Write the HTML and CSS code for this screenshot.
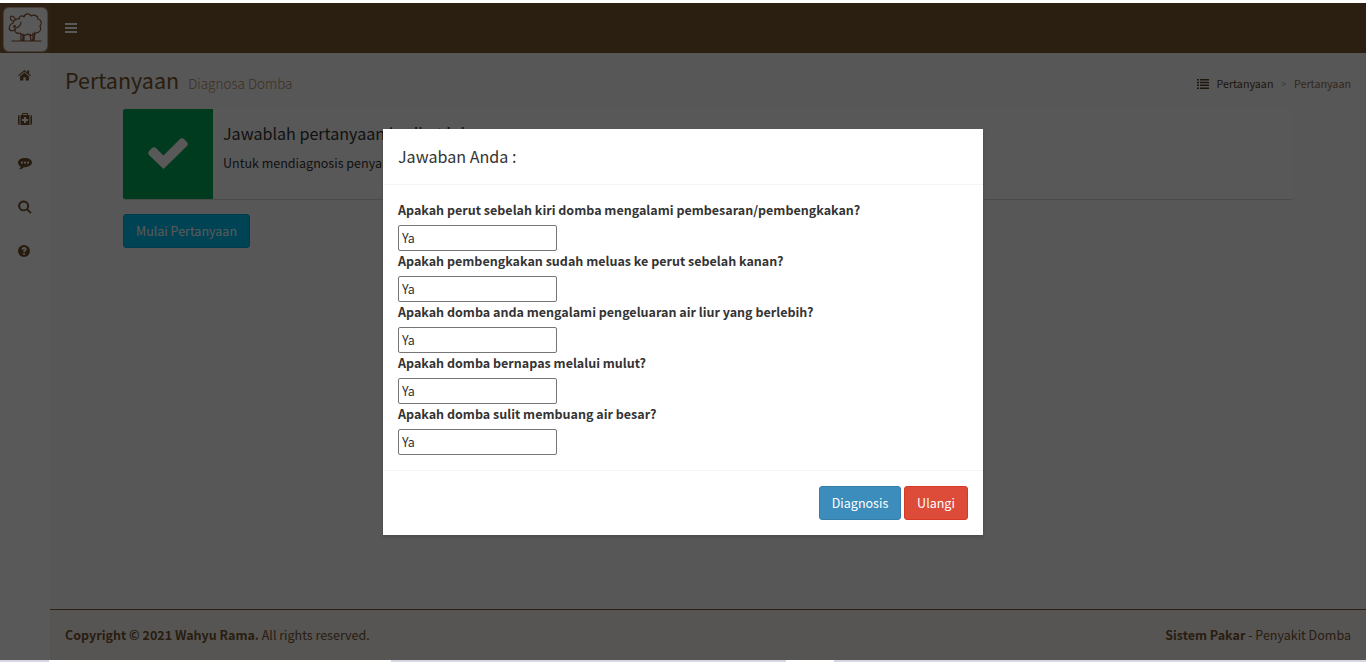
FILE: index.html
```html
<!DOCTYPE html>
<html lang="id">
<head>
<meta charset="utf-8">
<title>Pertanyaan</title>
<link rel="stylesheet" href="styles.css">
</head>
<body>
<div class="app">
  <header class="topbar">
    <div class="logo">
      <svg class="logo-img" viewBox="0 0 43 43" fill="none" stroke="#8a5238" stroke-width="1.2" stroke-linecap="round" stroke-linejoin="round">
        <path d="M15 11c0-3 3-4 5-2c1-4 6-4 7-1c4-2 7 0 7 3c4 1 4 5 2 7c2 4-1 7-4 7c-2 3-6 3-8 1c-3 2-7 1-8-1c-3 1-6-1-5-4"/>
        <path d="M15 11c-3-1-5 1-6 4c-3 1-5 5-3 7c2 2 5 0 6-2c3-1 5-3 5-6M10 13c-4 0-4-3-3-5c3 0 4 2 5 4M17 26v6h2v-6M20 27v5M26 26l1 6h2v-7M31 24l-1 8M8 33h29"/>
        <circle cx="10.500" cy="18.500" r=".8"/>
      </svg>
    </div>
    <svg class="burger" viewBox="0 0 12 12"><path fill="#fff" d="M0 1h12v2H0zM0 5h12v2H0zM0 9h12v2H0z"/></svg>
  </header>
  <div class="main">
    <nav class="sidebar">
      <a class="item"><svg viewBox="0 0 14 14"><path d="M7 1L0 7l.8.9L7 2.800l6.200 5.100L14 7l-2-1.700V1.500h-2v2.100zM7 3.900L2.200 8v4.500h3.600V9h2.400v3.500h3.600V8z"/></svg></a>
      <a class="item"><svg class="wide" viewBox="0 0 14 14"><path fill-rule="evenodd" d="M0 4.500Q0 3 1.500 3v10Q0 13 0 11.500zM12.500 3Q14 3 14 4.500v7q0 1.500-1.500 1.500zM2.500 3H4V2q0-1 1-1h4q1 0 1 1v1h1.500v10h-9zM5 3h4V2H5zM6 5v2H4v2h2v2h2V9h2V7H8V5z"/></svg></a>
      <a class="item"><svg class="wide" viewBox="0 0 14 14"><path fill-rule="evenodd" d="M7 2c4 0 7 2 7 4.600s-3 4.600-7 4.600h-1.200C4.500 12.600 3 13.200 1 13.300c1-.8 1.500-1.600 1.600-2.700C1 9.800 0 8.300 0 6.600C0 4 3 2 7 2zM3 5.700v1.900h2V5.700zm3 0v1.900h2V5.700zm3 0v1.900h2V5.700z"/></svg></a>
      <a class="item"><svg class="wide" viewBox="0 0 14 14"><path fill-rule="evenodd" d="M5.700.5a5.400 5.400 0 0 1 4.400 8.500l3.500 3.400-1.300 1.300-3.500-3.500A5.400 5.400 0 1 1 5.700.5zm0 1.900a3.500 3.500 0 1 0 0 7a3.500 3.500 0 0 0 0-7z"/></svg></a>
      <a class="item"><svg class="round" viewBox="0 0 14 14"><circle cx="7" cy="7" r="7"/><path class="hole" d="M4.200 5.300C4.300 3.300 5.600 2.400 7.100 2.400c1.600 0 3 1 3 2.600c0 2-2 2-2 3.200H6c0-2.200 2-2.100 2-3.100c0-1-1.600-1-1.800.6zM6 9.300h2.100v2.100H6z"/></svg></a>
    </nav>
    <div class="content">
      <div class="page-head">
        <h1>Pertanyaan<small>Diagnosa Domba</small></h1>
        <div class="crumbs">
          <svg viewBox="0 0 12 10"><path d="M0 0h2v1.500H0zM3 0h9v1.500H3zM0 2.800h2v1.500H0zM3 2.800h9v1.500H3zM0 5.600h2v1.500H0zM3 5.600h9v1.500H3zM0 8.400h2v1.500H0zM3 8.400h9v1.500H3z"/></svg>
          <span>Pertanyaan</span><span class="sep">&gt;</span><span class="current">Pertanyaan</span>
        </div>
      </div>
      <div class="body">
        <div class="info">
          <div class="info-icon"><svg viewBox="0 0 40 32"><path fill="#fff" d="M15.500 31L1 17q-1.500-2 0-4l3-3q2-1.500 4 0l7.500 7.500L32 1q2-1.500 4 0l3 3q1.500 2 0 4z"/></svg></div>
          <div class="info-text"><h4>Jawablah pertanyaan berikut ini :</h4><p>Untuk mendiagnosis penyakit domba</p></div>
        </div>
        <a class="btn aqua">Mulai Pertanyaan</a>
      </div>
      <footer class="footer">
        <div><b>Copyright © 2021 Wahyu Rama.</b> All rights reserved.</div>
        <div><b>Sistem Pakar</b> - Penyakit Domba</div>
      </footer>
    </div>
  </div>
</div>
<div class="taskbar"><i class="tab one"></i><i class="tab two"></i></div>
<div class="overlay">
  <section class="modal">
    <div class="modal-head">Jawaban Anda :</div>
    <div class="modal-body">
      <label>Apakah perut sebelah kiri domba mengalami pembesaran/pembengkakan?</label><input value="Ya">
      <label>Apakah pembengkakan sudah meluas ke perut sebelah kanan?</label><input value="Ya">
      <label>Apakah domba anda mengalami pengeluaran air liur yang berlebih?</label><input value="Ya">
      <label>Apakah domba bernapas melalui mulut?</label><input value="Ya">
      <label>Apakah domba sulit membuang air besar?</label><input value="Ya">
    </div>
    <div class="modal-foot"><a class="btn blue">Diagnosis</a><a class="btn red">Ulangi</a></div>
  </section>
</div>
</body>
</html>
```
FILE: styles.css
```css
* { box-sizing: border-box; }
body {
  margin: 0;
  height: 662px;
  overflow: hidden;
  background: #fff;
  padding-top: 3px;
  font: 12.53px/20px "Noto Sans CJK SC", "Noto Sans", sans-serif;
  color: #333;
}
h1, h4, p { margin: 0; font-weight: 400; }
.app { height: 657px; display: flex; flex-direction: column; background: #f9f9f9; }
.topbar { height: 50px; display: flex; align-items: center; background: #7d5a33; }
.logo { width: 50px; height: 50px; padding: 5px 3px 0 4px; background: #86633c; }
.logo-img { display: block; width: 43px; height: 43px; border-radius: 5px; background: #fff; box-shadow: 0 0 0 1px #c5b8a8; }
.burger { width: 12px; height: 12px; margin-left: 15px; }
.main { flex: 1; display: flex; min-height: 0; }
.sidebar { width: 50px; background: #fff; }
.item { height: 44px; display: flex; align-items: center; padding-left: 18px; }
.item svg { width: 13px; height: 13px; fill: #6f4f28; }
.item svg.wide { width: 14px; height: 14px; }
.item svg.round { width: 12px; height: 12px; margin-bottom: 1px; }
.item svg .hole { fill: #fff; }
.content { flex: 1; display: flex; flex-direction: column; }
.page-head { height: 56px; padding: 0 15px; display: flex; justify-content: space-between; align-items: center; color: #75552f; }
h1 { font-size: 21.5px; line-height: 26px; }
h1 small { font-size: 13.5px; font-weight: 300; color: #ad8a64; margin-left: 9px; }
.crumbs { display: flex; align-items: center; font-size: 10.74px; padding-top: 6px; color: #5a4124; }
.crumbs svg { width: 12px; height: 10px; margin-right: 7px; fill: #5a4124; }
.sep { color: #aaa; margin: 0 7.5px; font-size: 10px; }
.current { color: #977250; }
.body { flex: 1; padding: 0 73px; }
.info { display: flex; height: 90px; background: #fcfcfc; border-radius: 2px; box-shadow: 0 1px 1px rgba(0,0,0,.15); margin-bottom: 15px; }
.info-icon { width: 90px; background: #00a65a; display: flex; align-items: center; justify-content: center; border-radius: 2px 0 0 2px; }
.info-icon svg { width: 40px; height: 32px; }
.info-text { padding: 14px 10px; }
h4 { font-size: 16.1px; line-height: 20px; margin-bottom: 10px; }
.btn { display: inline-flex; align-items: center; justify-content: center; height: 34px; border: 1px solid; border-radius: 3px; color: #fff; }
.aqua { width: 127px; background: #00c0ef; border-color: #00acd6; }
.blue { width: 82px; background: #3c8dbc; border-color: #367fa9; }
.red { width: 64px; background: #dd4b39; border-color: #d73925; }
.footer { height: 51px; padding: 0 15px; border-top: 1px solid #7d5a33; background: #f8f4ef; display: flex; align-items: center; justify-content: space-between; color: #75552f; }
.taskbar { height: 2px; display: flex; background: #d5d5e3; padding-left: 49px; }
.tab { height: 2px; background: #fff; }
.one { width: 342px; }
.two { width: 48px; margin-left: 395px; }
.overlay { position: absolute; top: 3px; left: 0; width: 1366px; height: 657px; background: rgba(0,0,0,.65); padding-top: 126px; }
.modal { width: 600px; height: 406px; margin: 0 auto; background: #fff; box-shadow: 0 2px 3px rgba(0,0,0,.125); }
.modal-head { height: 56px; padding: 15px; font-size: 16.1px; line-height: 25px; border-bottom: 1px solid #f4f4f4; }
.modal-body { height: 285px; padding: 15px 15px 0; display: flex; flex-direction: column; align-items: flex-start; }
label { font-weight: 700; line-height: 20px; height: 25px; }
input { width: 159px; height: 26px; padding: 0 3px 2px; border: 1px solid #767676; border-radius: 2px; background: #fff; color: #333; font: inherit; }
.modal-foot { height: 65px; padding: 15px; display: flex; justify-content: flex-end; gap: 3px; border-top: 1px solid #f4f4f4; }
```
